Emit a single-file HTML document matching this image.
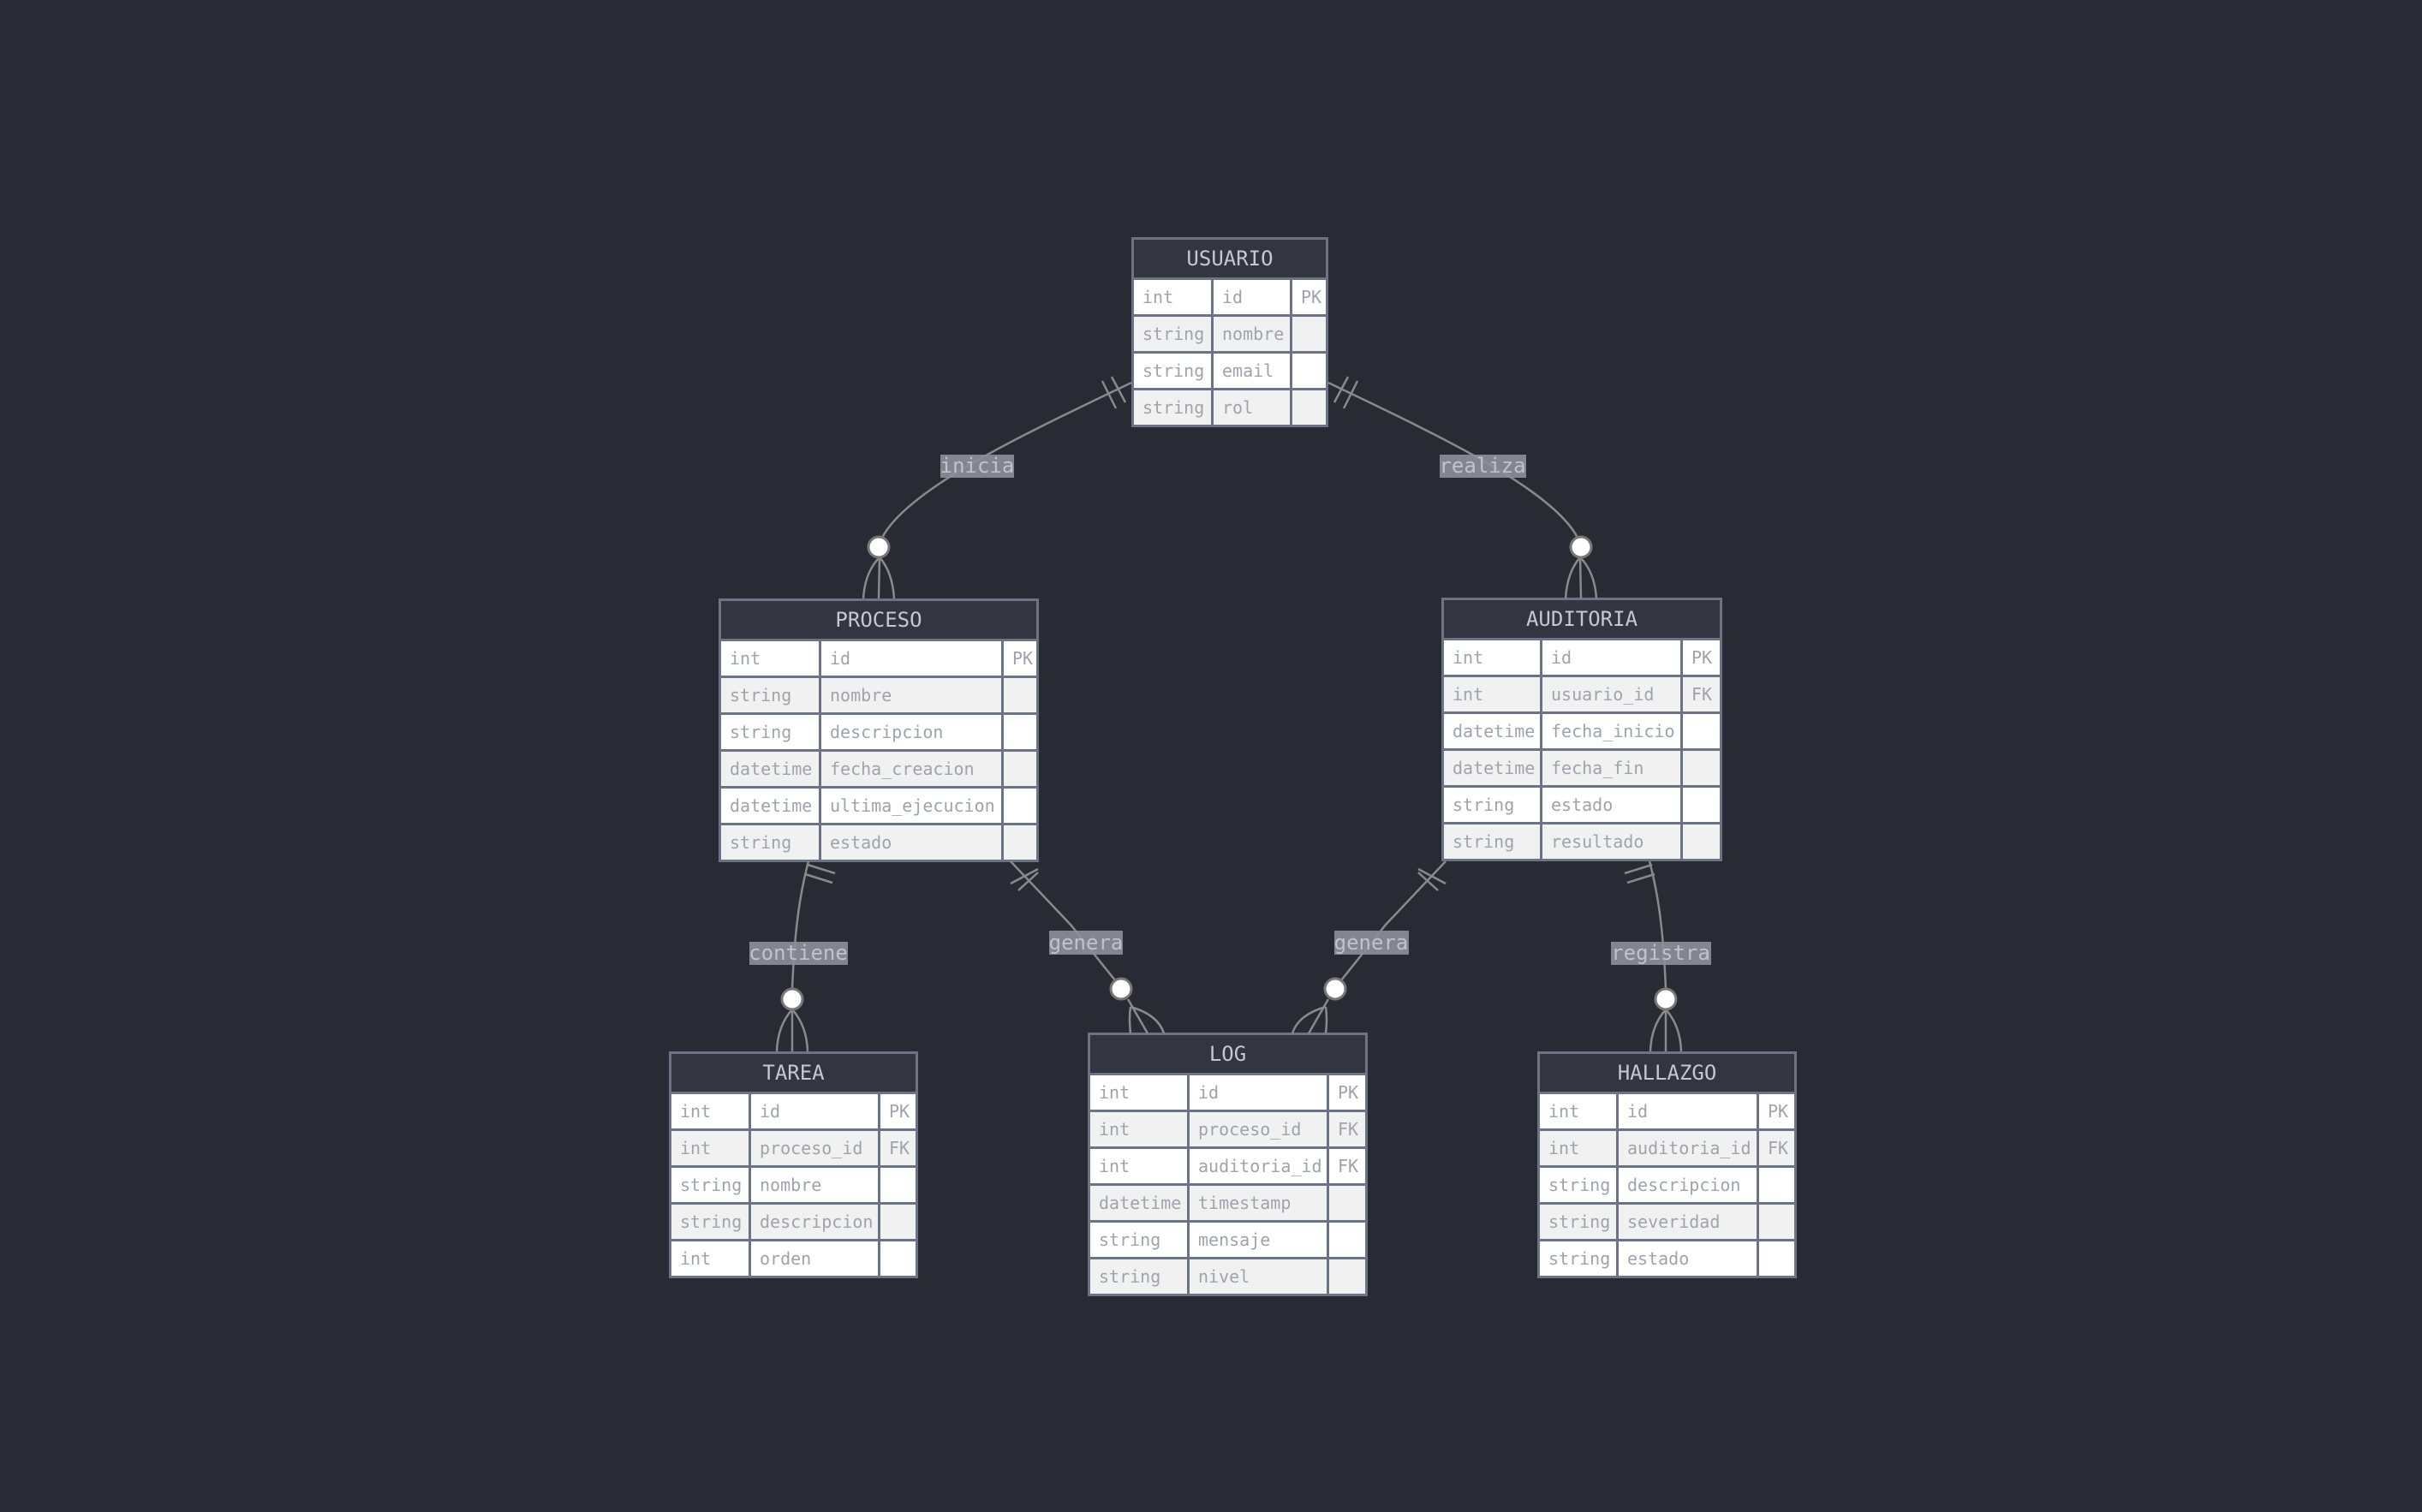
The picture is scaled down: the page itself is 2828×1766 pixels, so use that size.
<!DOCTYPE html>
<html><head><meta charset="utf-8"><style>
html,body{margin:0;padding:0;}
body{width:2828px;height:1766px;background:#282b33;position:relative;overflow:hidden;font-family:"DejaVu Sans Mono","Liberation Mono",monospace;}
.ent{position:absolute;background:#6b7385;padding:3px;box-sizing:border-box;}
.hd{height:44px;line-height:44px;background:#333640;color:#c4c8d0;font-size:24px;text-align:center;}
.row{display:grid;gap:3px;margin-top:3px;}
.row div{height:40px;line-height:40px;padding-left:10px;font-size:20px;color:#9ea3ae;background:#fff;white-space:nowrap;overflow:hidden;}
.row.g div{background:#f1f1f1;}
svg{position:absolute;left:0;top:0;}
</style></head><body>

<div class="ent" style="left:1321px;top:277px;width:230px;">
<div class="hd">USUARIO</div>
<div class="row" style="grid-template-columns:90px 89px 1fr"><div>int</div><div>id</div><div>PK</div></div>
<div class="row g" style="grid-template-columns:90px 89px 1fr"><div>string</div><div>nombre</div><div></div></div>
<div class="row" style="grid-template-columns:90px 89px 1fr"><div>string</div><div>email</div><div></div></div>
<div class="row g" style="grid-template-columns:90px 89px 1fr"><div>string</div><div>rol</div><div></div></div>
</div>

<div class="ent" style="left:839px;top:699px;width:374px;">
<div class="hd">PROCESO</div>
<div class="row" style="grid-template-columns:114px 210px 1fr"><div>int</div><div>id</div><div>PK</div></div>
<div class="row g" style="grid-template-columns:114px 210px 1fr"><div>string</div><div>nombre</div><div></div></div>
<div class="row" style="grid-template-columns:114px 210px 1fr"><div>string</div><div>descripcion</div><div></div></div>
<div class="row g" style="grid-template-columns:114px 210px 1fr"><div>datetime</div><div>fecha_creacion</div><div></div></div>
<div class="row" style="grid-template-columns:114px 210px 1fr"><div>datetime</div><div>ultima_ejecucion</div><div></div></div>
<div class="row g" style="grid-template-columns:114px 210px 1fr"><div>string</div><div>estado</div><div></div></div>
</div>

<div class="ent" style="left:1683px;top:698px;width:328px;">
<div class="hd">AUDITORIA</div>
<div class="row" style="grid-template-columns:112px 161px 1fr"><div>int</div><div>id</div><div>PK</div></div>
<div class="row g" style="grid-template-columns:112px 161px 1fr"><div>int</div><div>usuario_id</div><div>FK</div></div>
<div class="row" style="grid-template-columns:112px 161px 1fr"><div>datetime</div><div>fecha_inicio</div><div></div></div>
<div class="row g" style="grid-template-columns:112px 161px 1fr"><div>datetime</div><div>fecha_fin</div><div></div></div>
<div class="row" style="grid-template-columns:112px 161px 1fr"><div>string</div><div>estado</div><div></div></div>
<div class="row g" style="grid-template-columns:112px 161px 1fr"><div>string</div><div>resultado</div><div></div></div>
</div>

<div class="ent" style="left:781px;top:1228px;width:291px;">
<div class="hd">TAREA</div>
<div class="row" style="grid-template-columns:90px 148px 1fr"><div>int</div><div>id</div><div>PK</div></div>
<div class="row g" style="grid-template-columns:90px 148px 1fr"><div>int</div><div>proceso_id</div><div>FK</div></div>
<div class="row" style="grid-template-columns:90px 148px 1fr"><div>string</div><div>nombre</div><div></div></div>
<div class="row g" style="grid-template-columns:90px 148px 1fr"><div>string</div><div>descripcion</div><div></div></div>
<div class="row" style="grid-template-columns:90px 148px 1fr"><div>int</div><div>orden</div><div></div></div>
</div>

<div class="ent" style="left:1270px;top:1206px;width:327px;">
<div class="hd">LOG</div>
<div class="row" style="grid-template-columns:113px 160px 1fr"><div>int</div><div>id</div><div>PK</div></div>
<div class="row g" style="grid-template-columns:113px 160px 1fr"><div>int</div><div>proceso_id</div><div>FK</div></div>
<div class="row" style="grid-template-columns:113px 160px 1fr"><div>int</div><div>auditoria_id</div><div>FK</div></div>
<div class="row g" style="grid-template-columns:113px 160px 1fr"><div>datetime</div><div>timestamp</div><div></div></div>
<div class="row" style="grid-template-columns:113px 160px 1fr"><div>string</div><div>mensaje</div><div></div></div>
<div class="row g" style="grid-template-columns:113px 160px 1fr"><div>string</div><div>nivel</div><div></div></div>
</div>

<div class="ent" style="left:1795px;top:1228px;width:303px;">
<div class="hd">HALLAZGO</div>
<div class="row" style="grid-template-columns:89px 161px 1fr"><div>int</div><div>id</div><div>PK</div></div>
<div class="row g" style="grid-template-columns:89px 161px 1fr"><div>int</div><div>auditoria_id</div><div>FK</div></div>
<div class="row" style="grid-template-columns:89px 161px 1fr"><div>string</div><div>descripcion</div><div></div></div>
<div class="row g" style="grid-template-columns:89px 161px 1fr"><div>string</div><div>severidad</div><div></div></div>
<div class="row" style="grid-template-columns:89px 161px 1fr"><div>string</div><div>estado</div><div></div></div>
</div>

<svg width="2828" height="1766" viewBox="0 0 2828 1766">
<g fill="none" stroke="#8a8a8a" stroke-width="2.5">
<path d="M1321,447 C1200,505 1060,570 1030,628"/>
<path d="M1287,445 L1303,477 M1298,440 L1314,470"/>
<path d="M1027,651 L1026,699 M1027,651 Q1010,668 1008,699 M1027,651 Q1042,668 1044,699"/>
<path d="M1551,447 C1672,505 1812,570 1842,628"/>
<path d="M1585,445 L1569,477 M1574,440 L1558,470"/>
<path d="M1845,651 L1846,699 M1845,651 Q1862,668 1864,699 M1845,651 Q1830,668 1828,699"/>
<path d="M944,1006 C935,1040 928,1080 925,1155"/>
<path d="M940,1021 L972,1031 M943,1010 L975,1020"/>
<path d="M925,1179 L925,1228 M925,1179 Q908,1198 907,1228 M925,1179 Q942,1198 943,1228"/>
<path d="M1926,1006 C1935,1040 1942,1080 1945,1155"/>
<path d="M1932,1021 L1900,1031 M1929,1010 L1897,1020"/>
<path d="M1945,1179 L1945,1228 M1945,1179 Q1962,1198 1963,1228 M1945,1179 Q1928,1198 1927,1228"/>
<path d="M1180,1006 L1250,1080 L1302,1145"/>
<path d="M1180,1032 L1212,1015 M1189,1040 L1212,1019"/>
<path d="M1317,1167 L1340,1207 M1320,1176 Q1318,1190 1320,1207 M1320,1176 Q1352,1185 1359,1207"/>
<path d="M1688,1006 L1618,1080 L1566,1145"/>
<path d="M1688,1032 L1656,1015 M1679,1040 L1656,1019"/>
<path d="M1551,1167 L1528,1207 M1548,1176 Q1550,1190 1548,1207 M1548,1176 Q1516,1185 1509,1207"/>
</g>
<g fill="#ffffff" stroke="#777" stroke-width="3">
<circle cx="1026" cy="639" r="12"/>
<circle cx="1846" cy="639" r="12"/>
<circle cx="925" cy="1167" r="12"/>
<circle cx="1945" cy="1167" r="12"/>
<circle cx="1309" cy="1155" r="12"/>
<circle cx="1559" cy="1155" r="12"/>
</g>
<g fill="#8b8e98" opacity="0.92">
<rect x="1098" y="531" width="86" height="27"/>
<rect x="1681" y="531" width="101" height="27"/>
<rect x="875" y="1100" width="115" height="27"/>
<rect x="1881" y="1100" width="117" height="27"/>
<rect x="1225" y="1087" width="86" height="28"/>
<rect x="1558" y="1087" width="87" height="28"/>
</g>
<g fill="#c0c3cb" font-family="DejaVu Sans Mono, Liberation Mono, monospace" font-size="24" text-anchor="middle">
<text x="1141" y="552">inicia</text>
<text x="1731" y="552">realiza</text>
<text x="932" y="1121">contiene</text>
<text x="1939" y="1121">registra</text>
<text x="1268" y="1109">genera</text>
<text x="1601" y="1109">genera</text>
</g>
</svg>
</body></html>
